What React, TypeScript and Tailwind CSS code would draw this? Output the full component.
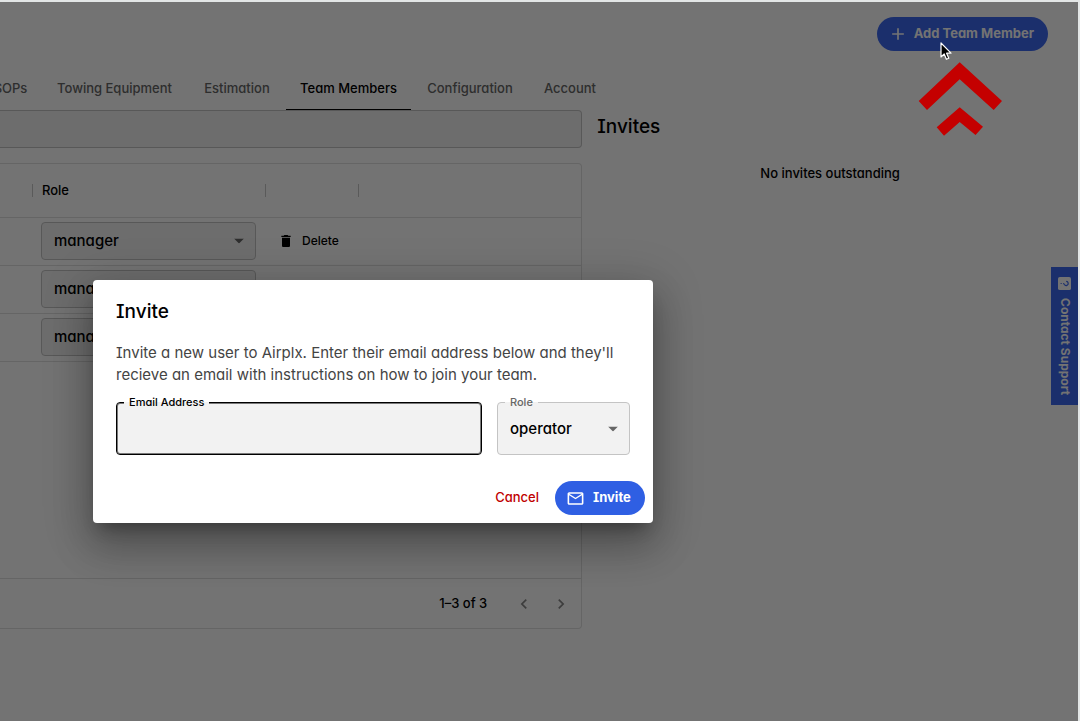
import React from "react";
import { MdAdd, MdDelete, MdMailOutline, MdChevronLeft, MdChevronRight } from "react-icons/md";

const tabs = [
  { label: "SOPs", width: "w-[61px]" },
  { label: "Towing Equipment", width: "w-[147px]" },
  { label: "Estimation", width: "w-[98px]" },
  { label: "Team Members", width: "w-[125px]", active: true },
  { label: "Configuration", width: "w-[118px]" },
  { label: "Account", width: "w-[82px]" },
];

const members = [
  { id: 1, role: "manager", canDelete: true },
  { id: 2, role: "manager", canDelete: false },
  { id: 3, role: "manager", canDelete: false },
];

function DropArrow({ className }: { className: string }) {
  return (
    <svg
      viewBox="0 0 10 5"
      aria-hidden="true"
      className={`pointer-events-none absolute top-1/2 h-[5px] w-[10px] -translate-y-1/2 fill-[#666] ${className}`}
    >
      <path d="M0 0h10L5 5z" />
    </svg>
  );
}

function RoleSelect({ id, value }: { id: string; value: string }) {
  return (
    <div className="relative w-[215px]">
      <select
        id={id}
        aria-label="Role"
        defaultValue={value}
        className="block h-[38px] w-full appearance-none rounded border border-[#c4c4c4] bg-[#f2f2f2] px-3 text-[15px] font-medium text-black"
      >
        <option>manager</option>
        <option>operator</option>
      </select>
      <DropArrow className="right-3" />
    </div>
  );
}

function FieldLabel({ htmlFor, className, children }: { htmlFor: string; className: string; children: React.ReactNode }) {
  return (
    <label
      htmlFor={htmlFor}
      className={`absolute -top-2 left-2 bg-linear-to-b from-white from-50% to-[#f2f2f2] to-50% px-[5px] text-[11px] leading-4 font-medium ${className}`}
    >
      {children}
    </label>
  );
}

function InviteDialog() {
  return (
    <div
      role="dialog"
      aria-labelledby="invite-title"
      className="w-[560px] rounded bg-white shadow-[0_11px_15px_-7px_rgba(0,0,0,0.3),0_24px_38px_3px_rgba(0,0,0,0.2),0_9px_46px_8px_rgba(0,0,0,0.16)]"
    >
      <div className="px-[23px] pt-[18px]">
        <h2 id="invite-title" className="text-[19px] leading-7 font-medium text-black">
          Invite
        </h2>
        <p className="mt-4 text-[15px] leading-[22px] text-[#444]">
          Invite a new user to Airplx. Enter their email address below and they'll recieve an email with instructions
          on how to join your team.
        </p>
        <div className="mt-4 flex gap-[15px]">
          <div className="relative flex-1">
            <input
              id="email"
              type="email"
              className="block h-[53px] w-full rounded border border-black bg-[#f2f2f2] px-3 text-[15px] shadow-[inset_0_0_0_1px_rgba(0,0,0,0.5)] outline-none"
            />
            <FieldLabel htmlFor="email" className="text-black">
              Email Address
            </FieldLabel>
          </div>
          <div className="relative w-[133px]">
            <select
              id="invite-role"
              defaultValue="operator"
              className="block h-[53px] w-full appearance-none rounded border border-[#c4c4c4] bg-[#f2f2f2] px-3 pt-0.5 text-[15px] font-medium text-black"
            >
              <option>operator</option>
              <option>manager</option>
            </select>
            <FieldLabel htmlFor="invite-role" className="text-[#666]">
              Role
            </FieldLabel>
            <DropArrow className="right-3" />
          </div>
        </div>
      </div>
      <div className="mt-[26px] flex items-center justify-end gap-4 pr-2 pb-2">
        <button type="button" className="text-[13px] font-medium text-[#c00000]">
          Cancel
        </button>
        <button
          type="submit"
          className="flex h-[34px] w-[90px] items-center gap-2 rounded-full bg-[#2f5fe3] pl-[11px] text-[13px] font-bold text-white"
        >
          <MdMailOutline className="size-[19px]" />
          Invite
        </button>
      </div>
    </div>
  );
}

export default function App() {
  return (
    <div className="flex min-h-screen flex-col bg-[#e3e6e6] pt-[2px] pr-[2px] font-['Inter','Open_Sans',sans-serif] [font-feature-settings:'cv08','cv11']">
      <div className="relative flex-1 overflow-hidden bg-white text-black">
        <header className="flex justify-end pt-[15px] pr-[30px]">
          <button
            type="button"
            className="flex h-[34px] items-center gap-[6px] rounded-full bg-[#3c68f0] pr-[14px] pl-[11px] text-[13px] font-bold text-white"
          >
            <MdAdd className="size-5" />
            Add Team Member
          </button>
        </header>

        <nav className="mt-[18px] -ml-5 flex">
          {tabs.map((tab) => (
            <a
              key={tab.label}
              href="#"
              className={`flex h-[42px] shrink-0 items-center justify-center border-b-2 text-[13px] font-medium whitespace-nowrap ${tab.width} ${
                tab.active ? "border-black text-black" : "border-transparent text-[#666]"
              }`}
            >
              {tab.label}
            </a>
          ))}
        </nav>

        <main className="grid grid-cols-[5fr_4fr] gap-[15px] pr-[15px]">
          <div>
            <input
              type="search"
              aria-label="Search team members"
              className="-mt-px block h-[38px] w-full rounded-r border border-l-0 border-[#c4c4c4] bg-[#f2f2f2] px-3 outline-none"
            />
            <section className="mt-[15px] flex h-[466px] flex-col rounded-r border border-l-0 border-[#e0e0e0]">
              <table className="w-full table-fixed border-collapse text-left">
                <colgroup>
                  <col className="w-[33px]" />
                  <col className="w-[233px]" />
                  <col className="w-[93px]" />
                  <col />
                </colgroup>
                <thead>
                  <tr className="h-[53px] border-b border-[#e0e0e0] text-[13px]">
                    <th>
                      <span className="ml-auto block h-[13px] w-px bg-[#c8c8c8]" />
                    </th>
                    <th className="pl-[9px] font-medium">
                      <span className="flex items-center justify-between">
                        Role
                        <span className="h-[13px] w-px bg-[#c8c8c8]" />
                      </span>
                    </th>
                    <th>
                      <span className="ml-auto block h-[13px] w-px bg-[#c8c8c8]" />
                    </th>
                    <th />
                  </tr>
                </thead>
                <tbody>
                  {members.map((member) => (
                    <tr key={member.id} className="h-12 border-b border-[#e0e0e0]">
                      <td />
                      <td className="pl-2">
                        <RoleSelect id={`role-${member.id}`} value={member.role} />
                      </td>
                      <td className="pl-3">
                        {member.canDelete && (
                          <button type="button" className="flex items-center gap-2 text-[12px] font-medium">
                            <MdDelete className="size-4" />
                            Delete
                          </button>
                        )}
                      </td>
                      <td />
                    </tr>
                  ))}
                </tbody>
              </table>
              <footer className="mt-auto flex h-[50px] items-center justify-end border-t border-[#e0e0e0] pr-[10px] text-[13px] font-medium">
                <span>1–3 of 3</span>
                <button type="button" aria-label="Previous page" className="ml-[27px] text-[#888]">
                  <MdChevronLeft className="size-5" />
                </button>
                <button type="button" aria-label="Next page" className="ml-[17px] text-[#888]">
                  <MdChevronRight className="size-5" />
                </button>
              </footer>
            </section>
          </div>
          <aside>
            <h2 className="text-[19px] leading-8 font-medium">Invites</h2>
            <p className="mt-5 text-center text-[13px] leading-5 font-medium">No invites outstanding</p>
          </aside>
        </main>

        <button
          type="button"
          className="absolute top-[265px] right-0 flex h-[138px] w-[27px] items-center justify-center gap-2 bg-[#3c68f0] text-[12px] font-bold whitespace-nowrap text-white [writing-mode:vertical-rl]"
        >
          <svg viewBox="0 0 14 14" aria-hidden="true" className="size-[13px] shrink-0 rotate-90">
            <rect width="14" height="14" rx="2" fill="white" />
            <path d="M4.8 5.2a2.2 2.2 0 1 1 3.3 1.9c-.8.4-1.1.7-1.1 1.4M7 10v1.2" fill="none" stroke="#3c68f0" strokeWidth="1.3" />
          </svg>
          Contact Support
        </button>

        <div className="absolute inset-0 bg-black/55 pt-[278px] pl-[93px]">
          <InviteDialog />
        </div>

        <svg viewBox="0 0 85 75" aria-hidden="true" className="absolute top-[60px] right-[75px] h-[75px] w-[85px] fill-[#c40000]">
          <path d="M41.7.3 84 39l-8.3 9-34-30.7L9 48 .7 39z" />
          <path d="M41.7 45.3 65 64.7l-7.5 8.2-15.8-12.9L26 73.7l-7.3-8.4z" />
        </svg>
        <svg viewBox="0 0 12 19" aria-hidden="true" className="absolute top-10 right-[126px] h-[19px] w-3">
          <path
            d="M1 1v14l3.2-3 2.2 5.3 2.4-1-2.2-5.1H11z"
            fill="black"
            stroke="white"
            strokeWidth="1.2"
            strokeLinejoin="round"
          />
        </svg>
      </div>
    </div>
  );
}
